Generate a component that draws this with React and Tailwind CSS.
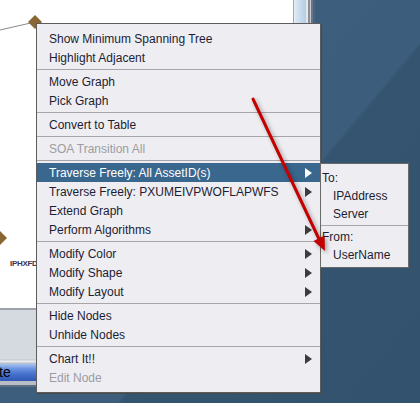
import React from "react";

function Tri({ white }) {
  return (
    <svg width="7" height="10" viewBox="0 0 7 10" className="shrink-0">
      <polygon points="0,0 7,5 0,10" fill={white ? "#ffffff" : "#3c3c3c"} />
    </svg>
  );
}

function Item({ label, sub, disabled, selected }) {
  return (
    <div
      className={
        "h-[19px] flex items-center justify-between pl-[12px] pr-[8px] whitespace-nowrap " +
        (selected ? "bg-[#3a678d] text-white" : disabled ? "text-[#9c9ca2]" : "text-[#1d1d33]")
      }
    >
      <span>{label}</span>
      {sub && <Tri white={selected} />}
    </div>
  );
}

function Sep() {
  return (
    <div className="h-[5px] pt-[2px]">
      <div className="h-px bg-[#a6a6aa]" />
    </div>
  );
}

export default function App() {
  return (
    <div
      className="relative w-[420px] h-[403px] overflow-hidden bg-[linear-gradient(130deg,#3f607e_0%,#3c5d7b_60%,#34546f_60.6%,#33526d_100%)]"
      style={{ fontFamily: '"Liberation Sans", Arial, sans-serif' }}
    >
      {/* application window */}
      <div className="w-[315px] h-[388px] flex flex-col">
        <div className="h-[308px] flex">
          <div className="flex-1 bg-white relative">
            <svg className="absolute inset-0" width="293" height="308">
              <line x1="0" y1="30" x2="35" y2="22" stroke="#8a8a8a" strokeWidth="1" />
              <polygon points="35,15 42,22 35,29 28,22" fill="#8a6732" />
              <polygon points="0,231 7,238 0,245 -7,238" fill="#8a6732" />
            </svg>
            <span className="absolute left-[10px] top-[260px] text-[8px] leading-[8px] font-bold text-[#3b3552] tracking-[-0.3px]">
              IPHXFD
            </span>
          </div>
          <div className="w-[22px] flex">
            <div className="w-px bg-[#a4a8ae]" />
            <div className="w-px bg-[#e6eef6]" />
            <div className="w-[11px] bg-[linear-gradient(90deg,#dce8f4,#b4cde6)]" />
            <div className="w-[2px] bg-[#e4e6ea]" />
            <div className="w-[2px] bg-[#8a8e96]" />
            <div className="w-px bg-[#c8ccd2]" />
            <div className="w-[2px] bg-[#6a7484]" />
            <div className="w-[2px] bg-[#4b6580]" />
          </div>
        </div>
        <div className="h-[51px] border-t-2 border-[#9da1a9] bg-[#d5d9e0]" />
        <div className="h-[5px] bg-[linear-gradient(180deg,#c4c8d0,#e8eaee_50%,#b0b6c0)]" />
        <div className="h-[17px] bg-[linear-gradient(180deg,#a6c3f2_0%,#6890e0_30%,#4470cc_60%,#3058b4_100%)] text-[14px] leading-[17px] text-black">
          <span className="-ml-[1px]">te</span>
        </div>
        <div className="h-[4px] bg-[#b9bdc5]" />
        <div className="h-[2px] bg-[#5d6e80]" />
      </div>

      {/* popup menu */}
      <div className="absolute left-[36px] top-[23px] w-[285px] border border-[#5c5c5c] bg-[#eeeef2] pt-[5px] pb-[5px] text-[12px] shadow-[1px_1px_0_#4a4a4a]">
        <Item label="Show Minimum Spanning Tree" />
        <Item label="Highlight Adjacent" />
        <Sep />
        <Item label="Move Graph" />
        <Item label="Pick Graph" />
        <Sep />
        <Item label="Convert to Table" />
        <Sep />
        <Item label="SOA Transition All" disabled />
        <Sep />
        <Item label="Traverse Freely: All AssetID(s)" sub selected />
        <Item label="Traverse Freely: PXUMEIVPWOFLAPWFS" sub />
        <Item label="Extend Graph" />
        <Item label="Perform Algorithms" sub />
        <Sep />
        <Item label="Modify Color" sub />
        <Item label="Modify Shape" sub />
        <Item label="Modify Layout" sub />
        <Sep />
        <Item label="Hide Nodes" />
        <Item label="Unhide Nodes" />
        <Sep />
        <Item label="Chart It!!" sub />
        <Item label="Edit Node" disabled />
      </div>

      {/* submenu */}
      <div className="absolute left-[320px] top-[163px] w-[89px] border border-[#6a6a6a] bg-[#eeeef2] pt-[5px] pb-[3px] text-[12px] text-[#1d1d33]">
        <div className="h-[18px] flex items-center pl-[1px]">To:</div>
        <div className="h-[18px] flex items-center pl-[12px]">IPAddress</div>
        <div className="h-[18px] flex items-center pl-[12px]">Server</div>
        <div className="h-[5px] pt-[2px]">
          <div className="h-px bg-[#a6a6aa]" />
        </div>
        <div className="h-[18px] flex items-center pl-[1px]">From:</div>
        <div className="h-[18px] flex items-center pl-[12px]">UserName</div>
      </div>

      {/* red annotation arrow */}
      <svg
        className="absolute inset-0 pointer-events-none"
        width="420"
        height="403"
        style={{ filter: "drop-shadow(2px 2px 2px rgba(0,0,0,0.35))" }}
      >
        <line x1="253" y1="99" x2="319" y2="239" stroke="#c40000" strokeWidth="3" strokeLinecap="round" />
        <polygon points="325,251 324.5,235.5 313.5,241" fill="#c40000" />
      </svg>
    </div>
  );
}
